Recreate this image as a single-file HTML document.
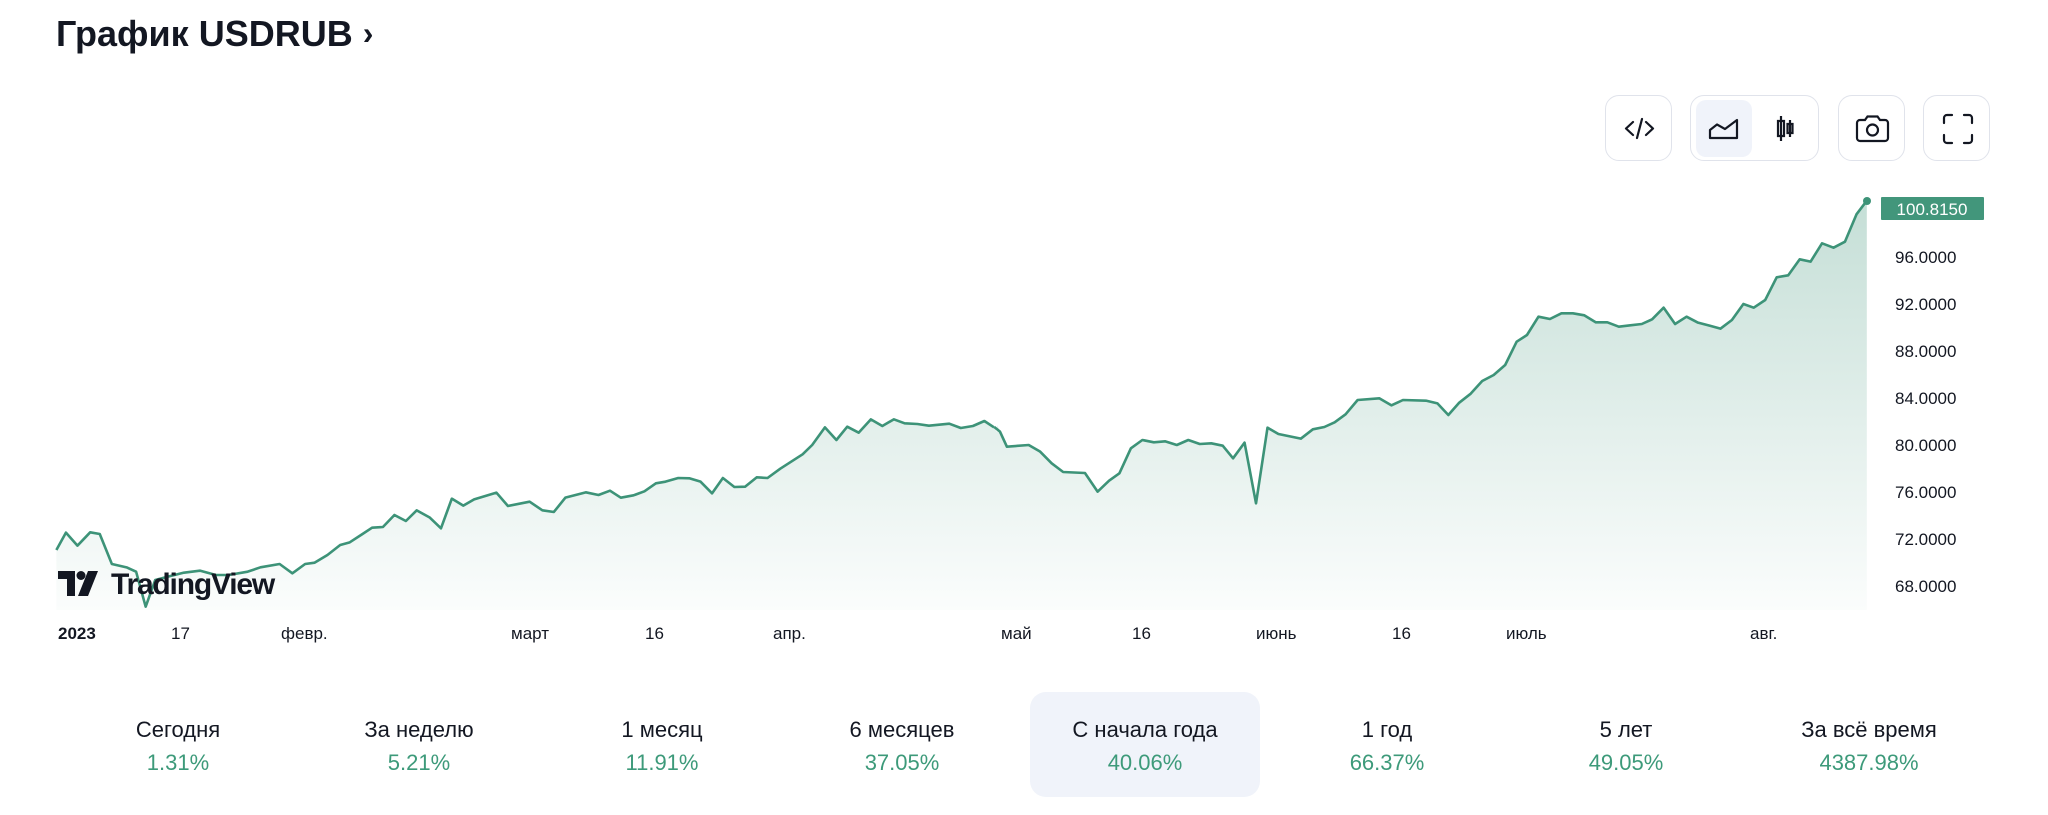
<!DOCTYPE html>
<html><head><meta charset="utf-8">
<style>
html,body{margin:0;padding:0;background:#fff;}
body{width:2048px;height:815px;position:relative;overflow:hidden;font-family:"Liberation Sans","DejaVu Sans",sans-serif;color:#131722;}
.title{position:absolute;left:56px;top:13px;font-size:36px;font-weight:bold;letter-spacing:0;white-space:nowrap;}
.btn{position:absolute;top:95px;height:66px;border:1.5px solid #e0e3eb;border-radius:14px;box-sizing:border-box;}
.btn svg{position:absolute;left:0;top:0;}
.ylab{position:absolute;left:1895px;font-size:17px;line-height:20px;color:#131722;}
.tlab{position:absolute;top:624px;font-size:17px;line-height:20px;color:#131722;}
.stat{position:absolute;top:692px;width:230px;height:105px;text-align:center;border-radius:16px;}
.stat .l{position:absolute;left:0;right:0;top:25px;font-size:22px;line-height:26px;color:#131722;}
.stat .v{position:absolute;left:0;right:0;top:58px;font-size:22px;line-height:26px;color:#3d9a7a;}
</style></head><body>
<div class="title">График USDRUB <span style="font-size:32px;position:relative;top:-2px">›</span></div>

<div class="btn" style="left:1605px;width:67px;">
<svg width="67" height="66" viewBox="0 0 67 66"><path d="M27 26 L20 32.5 L27 39 M40 26 L47 32.5 L40 39 M36 23 L31 42" fill="none" stroke="#131722" stroke-width="2.2" stroke-linecap="round" stroke-linejoin="round"/></svg>
</div>
<div class="btn" style="left:1690px;width:129px;">
<div style="position:absolute;left:5px;top:4px;width:56px;height:57px;background:#f0f3fa;border-radius:10px;"></div>
<svg width="129" height="66" viewBox="0 0 129 66"><path d="M19 42 L19 34 L26 28.5 L34 33 L46 24 L46 42 Z" fill="none" stroke="#131722" stroke-width="2.2" stroke-linejoin="round"/>
<path d="M90 20 V45 M87 25 h6 v15 h-6 Z M99 24 V41 M96.5 28 h5 v9 h-5 Z" fill="none" stroke="#131722" stroke-width="2.2"/></svg>
</div>
<div class="btn" style="left:1838px;width:67px;">
<svg width="67" height="66" viewBox="0 0 67 66"><path d="M18 27 a3 3 0 0 1 3-3 h5 l2.5-3.5 h10 l2.5 3.5 h5 a3 3 0 0 1 3 3 v15 a3 3 0 0 1-3 3 h-25 a3 3 0 0 1-3-3 Z" fill="none" stroke="#131722" stroke-width="2.2"/><circle cx="33.5" cy="34" r="5.5" fill="none" stroke="#131722" stroke-width="2.2"/></svg>
</div>
<div class="btn" style="left:1923px;width:67px;">
<svg width="67" height="66" viewBox="0 0 67 66"><path d="M20 27 v-5 a3 3 0 0 1 3-3 h5 M40 19 h5 a3 3 0 0 1 3 3 v5 M48 39 v5 a3 3 0 0 1-3 3 h-5 M28 47 h-5 a3 3 0 0 1-3-3 v-5" fill="none" stroke="#131722" stroke-width="2.2" stroke-linecap="round"/></svg>
</div>

<svg style="position:absolute;left:0;top:0" width="2048" height="815">
<defs>
<linearGradient id="g" x1="0" y1="200" x2="0" y2="610" gradientUnits="userSpaceOnUse">
<stop offset="0" stop-color="#3d9378" stop-opacity="0.30"/>
<stop offset="1" stop-color="#3d9378" stop-opacity="0.02"/>
</linearGradient>
<clipPath id="c">
<polygon transform="translate(50,380) scale(0.6378,0.33333)" points="10,720 10,510 25,458 43,497 63,457 78,462 97,552 120,562 135,575 150,680 165,600 185,590 210,578 235,572 260,585 280,585 310,575 330,562 360,552 380,580 400,552 415,548 435,525 455,495 470,487 490,462 505,443 522,441 540,405 558,423 575,391 595,412 613,445 630,356 648,377 665,358 700,338 718,378 752,365 772,391 790,396 808,353 840,337 860,345 878,332 895,353 915,346 932,334 950,310 965,305 985,294 1003,295 1020,305 1038,340 1055,294 1073,321 1090,320 1108,292 1125,294 1145,266 1180,223 1195,195 1215,142 1233,180 1250,140 1268,158 1287,118 1305,138 1323,118 1340,130 1360,132 1378,137 1410,131 1428,144 1447,138 1465,123 1480,142 1489,170 1489,720"/>
<polygon transform="translate(1000,180) scale(0.57405,0.33333)" points="-5,1320 -5,735 0,755 12,800 50,795 70,815 90,850 110,876 148,879 170,935 190,902 208,880 228,805 248,780 268,787 288,784 308,795 328,780 348,792 368,790 388,797 406,835 426,788 446,970 466,743 485,762 524,776 545,748 565,741 583,727 602,703 623,660 661,655 682,676 702,660 742,662 762,670 781,705 800,668 820,641 840,603 860,585 880,555 900,485 918,465 938,410 958,417 978,400 998,400 1018,406 1038,427 1058,427 1078,440 1098,436 1118,432 1136,418 1156,383 1176,432 1196,410 1216,428 1236,437 1255,446 1275,420 1295,372 1313,383 1333,360 1353,292 1373,286 1393,238 1412,245 1432,190 1452,203 1472,185 1492,103 1510,62 1510,1320"/>
</clipPath>
</defs>
<rect x="50" y="190" width="1820" height="420" fill="url(#g)" clip-path="url(#c)"/>
<g fill="none" stroke="#3d9378" stroke-width="2.6" stroke-linejoin="round">
<polyline vector-effect="non-scaling-stroke" transform="translate(50,380) scale(0.6378,0.33333)" points="10,510 25,458 43,497 63,457 78,462 97,552 120,562 135,575 150,680 165,600 185,590 210,578 235,572 260,585 280,585 310,575 330,562 360,552 380,580 400,552 415,548 435,525 455,495 470,487 490,462 505,443 522,441 540,405 558,423 575,391 595,412 613,445 630,356 648,377 665,358 700,338 718,378 752,365 772,391 790,396 808,353 840,337 860,345 878,332 895,353 915,346 932,334 950,310 965,305 985,294 1003,295 1020,305 1038,340 1055,294 1073,321 1090,320 1108,292 1125,294 1145,266 1180,223 1195,195 1215,142 1233,180 1250,140 1268,158 1287,118 1305,138 1323,118 1340,130 1360,132 1378,137 1410,131 1428,144 1447,138 1465,123 1480,142"/>
<polyline vector-effect="non-scaling-stroke" transform="translate(1000,180) scale(0.57405,0.33333)" points="-10,741 0,755 12,800 50,795 70,815 90,850 110,876 148,879 170,935 190,902 208,880 228,805 248,780 268,787 288,784 308,795 328,780 348,792 368,790 388,797 406,835 426,788 446,970 466,743 485,762 524,776 545,748 565,741 583,727 602,703 623,660 661,655 682,676 702,660 742,662 762,670 781,705 800,668 820,641 840,603 860,585 880,555 900,485 918,465 938,410 958,417 978,400 998,400 1018,406 1038,427 1058,427 1078,440 1098,436 1118,432 1136,418 1156,383 1176,432 1196,410 1216,428 1236,437 1255,446 1275,420 1295,372 1313,383 1333,360 1353,292 1373,286 1393,238 1412,245 1432,190 1452,203 1472,185 1492,103 1510,62"/>
</g>
<circle cx="1867" cy="201" r="4" fill="#3d9378"/>
<rect x="1881" y="197" width="103" height="23" rx="1" fill="#42967b"/>
<text x="1932" y="215" text-anchor="middle" font-family="Liberation Sans, sans-serif" font-size="17" fill="#fff">100.8150</text>
<g fill="#131722">
<path d="M58 571 h17 v25 h-8 v-17 h-9 Z"/>
<circle cx="81" cy="575.5" r="4.5"/>
<path d="M88 571 h10 l-10 25 h-10 Z"/>
</g>
<text x="111" y="594" font-family="Liberation Sans, sans-serif" font-weight="bold" font-size="30" letter-spacing="-1.2" fill="#131722">TradingView</text>
</svg>

<div class="ylab" style="top:248px">96.0000</div>
<div class="ylab" style="top:295px">92.0000</div>
<div class="ylab" style="top:342px">88.0000</div>
<div class="ylab" style="top:389px">84.0000</div>
<div class="ylab" style="top:436px">80.0000</div>
<div class="ylab" style="top:483px">76.0000</div>
<div class="ylab" style="top:530px">72.0000</div>
<div class="ylab" style="top:577px">68.0000</div>

<div class="tlab" style="left:58px;font-weight:bold">2023</div>
<div class="tlab" style="left:171px">17</div>
<div class="tlab" style="left:281px">февр.</div>
<div class="tlab" style="left:511px">март</div>
<div class="tlab" style="left:645px">16</div>
<div class="tlab" style="left:773px">апр.</div>
<div class="tlab" style="left:1001px">май</div>
<div class="tlab" style="left:1132px">16</div>
<div class="tlab" style="left:1256px">июнь</div>
<div class="tlab" style="left:1392px">16</div>
<div class="tlab" style="left:1506px">июль</div>
<div class="tlab" style="left:1750px">авг.</div>

<div class="stat" style="left:63px"><div class="l">Сегодня</div><div class="v">1.31%</div></div>
<div class="stat" style="left:304px"><div class="l">За неделю</div><div class="v">5.21%</div></div>
<div class="stat" style="left:547px"><div class="l">1 месяц</div><div class="v">11.91%</div></div>
<div class="stat" style="left:787px"><div class="l">6 месяцев</div><div class="v">37.05%</div></div>
<div class="stat" style="left:1030px;background:#f0f3fa"><div class="l">С начала года</div><div class="v">40.06%</div></div>
<div class="stat" style="left:1272px"><div class="l">1 год</div><div class="v">66.37%</div></div>
<div class="stat" style="left:1511px"><div class="l">5 лет</div><div class="v">49.05%</div></div>
<div class="stat" style="left:1754px"><div class="l">За всё время</div><div class="v">4387.98%</div></div>
</body></html>
